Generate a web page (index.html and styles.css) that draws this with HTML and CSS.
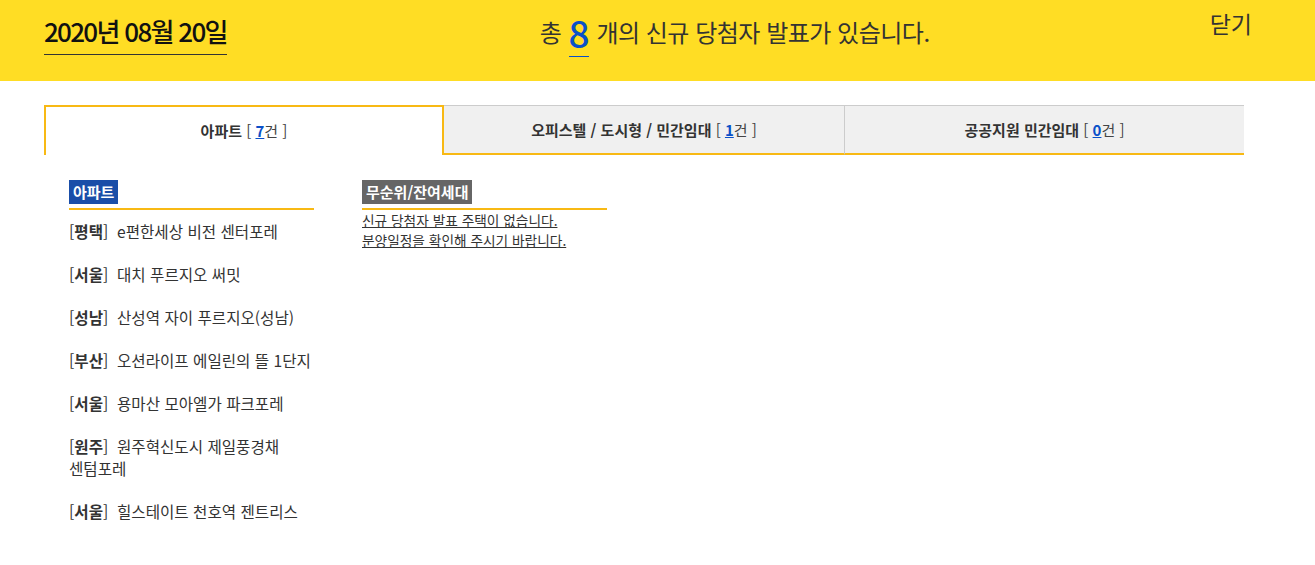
FILE: index.html
```html
<!DOCTYPE html>
<html lang="ko">
<head>
    <meta charset="UTF-8">
    <meta name="viewport" content="width=device-width, initial-scale=1.0">
    <title>신규 당첨자 발표</title>
    <link rel="stylesheet" href="styles.css">
</head>
<body>
    <div class="top-bar">
        <div class="date"><span>2020년 08월 20일</span></div>
        <div class="notice">총 <strong>8</strong> 개의 신규 당첨자 발표가 있습니다.</div>
        <a href="#" class="close">닫기</a>
    </div>
    <div class="wrap">
        <ul class="tabs">
            <li class="tab on"><b>아파트</b> [ <em>7</em>건 ]</li>
            <li class="tab"><b>오피스텔 / 도시형 / 민간임대</b> [ <em>1</em>건 ]</li>
            <li class="tab"><b>공공지원 민간임대</b> [ <em>0</em>건 ]</li>
        </ul>
        <div class="tab-body">
            <div class="col">
                <h3 class="col-title"><span class="blue">아파트</span></h3>
                <ul class="house-list">
                    <li>[<b>평택</b>]&nbsp; e편한세상 비전 센터포레</li>
                    <li>[<b>서울</b>]&nbsp; 대치 푸르지오 써밋</li>
                    <li>[<b>성남</b>]&nbsp; 산성역 자이 푸르지오(성남)</li>
                    <li>[<b>부산</b>]&nbsp; 오션라이프 에일린의 뜰 1단지</li>
                    <li>[<b>서울</b>]&nbsp; 용마산 모아엘가 파크포레</li>
                    <li>[<b>원주</b>]&nbsp; 원주혁신도시 제일풍경채 센텀포레</li>
                    <li>[<b>서울</b>]&nbsp; 힐스테이트 천호역 젠트리스</li>
                </ul>
            </div>
            <div class="col">
                <h3 class="col-title"><span class="gray">무순위/잔여세대</span></h3>
                <p class="empty">신규 당첨자 발표 주택이 없습니다.<br>분양일정을 확인해 주시기 바랍니다.</p>
            </div>
        </div>
    </div>
</body>
</html>
```

FILE: styles.css
```css
body {
    margin: 0;
    font-family: "Noto Sans CJK KR", "Noto Sans", sans-serif;
    color: #333;
    background: #fff;
}
ul {
    list-style: none;
    margin: 0;
    padding: 0;
}
.top-bar {
    display: flex;
    align-items: flex-start;
    height: 81px;
    background: #ffdd24;
    padding: 0 63px 0 44px;
    box-sizing: border-box;
}
.date {
    padding-top: 14px;
}
.date span {
    display: inline-block;
    font-size: 26px;
    font-weight: 500;
    letter-spacing: -1.7px;
    color: #111;
    line-height: 34px;
    padding-bottom: 6px;
    border-bottom: 1px solid #333;
}
.notice {
    margin-left: 313px;
    padding-top: 12px;
    font-size: 24px;
    letter-spacing: -0.5px;
    line-height: 40px;
    color: #333;
}
.notice strong {
    display: inline-block;
    font-size: 37px;
    font-weight: 500;
    color: #0a50c8;
    line-height: 40px;
    border-bottom: 1px solid #0a50c8;
    height: 44px;
    vertical-align: top;
    margin: 0 1px;
}
.close {
    margin-left: auto;
    padding-top: 6px;
    font-size: 23px;
    line-height: 34px;
    color: #333;
    text-decoration: none;
}
.wrap {
    width: 1200px;
    margin: 24px 0 0 44px;
}
.tabs {
    display: flex;
}
.tab {
    width: 400px;
    flex: none;
    height: 50px;
    line-height: 47px;
    text-align: center;
    font-size: 15px;
    color: #444;
    background: #f0f0f0;
    border-top: 1px solid #ccc;
    border-left: 1px solid #ccc;
    border-bottom: 2px solid #f8b914;
    box-sizing: border-box;
}
.tab:nth-child(2) {
    border-left: none;
}
.tab.on {
    background: #fff;
    border: 2px solid #f8b914;
    border-bottom: none;
    line-height: 48px;
}
.tab b {
    font-weight: 700;
    color: #333;
}
.tab em {
    font-style: normal;
    font-weight: 700;
    color: #0a50c8;
    text-decoration: underline;
}
.tab-body {
    display: flex;
    gap: 48px;
    padding: 25px 0 0 25px;
}
.col {
    width: 245px;
}
.col-title {
    margin: 0;
    padding-bottom: 4px;
    border-bottom: 2px solid #f8b914;
    line-height: 0;
}
.col-title span {
    display: inline-block;
    height: 24px;
    line-height: 24px;
    padding: 0 4px;
    font-size: 15px;
    font-weight: 700;
    color: #fff;
}
.blue {
    background: #1a4ea8;
}
.gray {
    background: #666;
}
.house-list {
    padding-top: 10px;
}
.house-list li {
    font-size: 15.6px;
    line-height: 22px;
    margin-bottom: 21px;
    color: #333;
    word-break: keep-all;
}
.house-list b {
    font-weight: 700;
}
.empty {
    margin: 0;
    font-size: 13.7px;
    line-height: 20px;
    color: #333;
    text-decoration: underline;
}
```
